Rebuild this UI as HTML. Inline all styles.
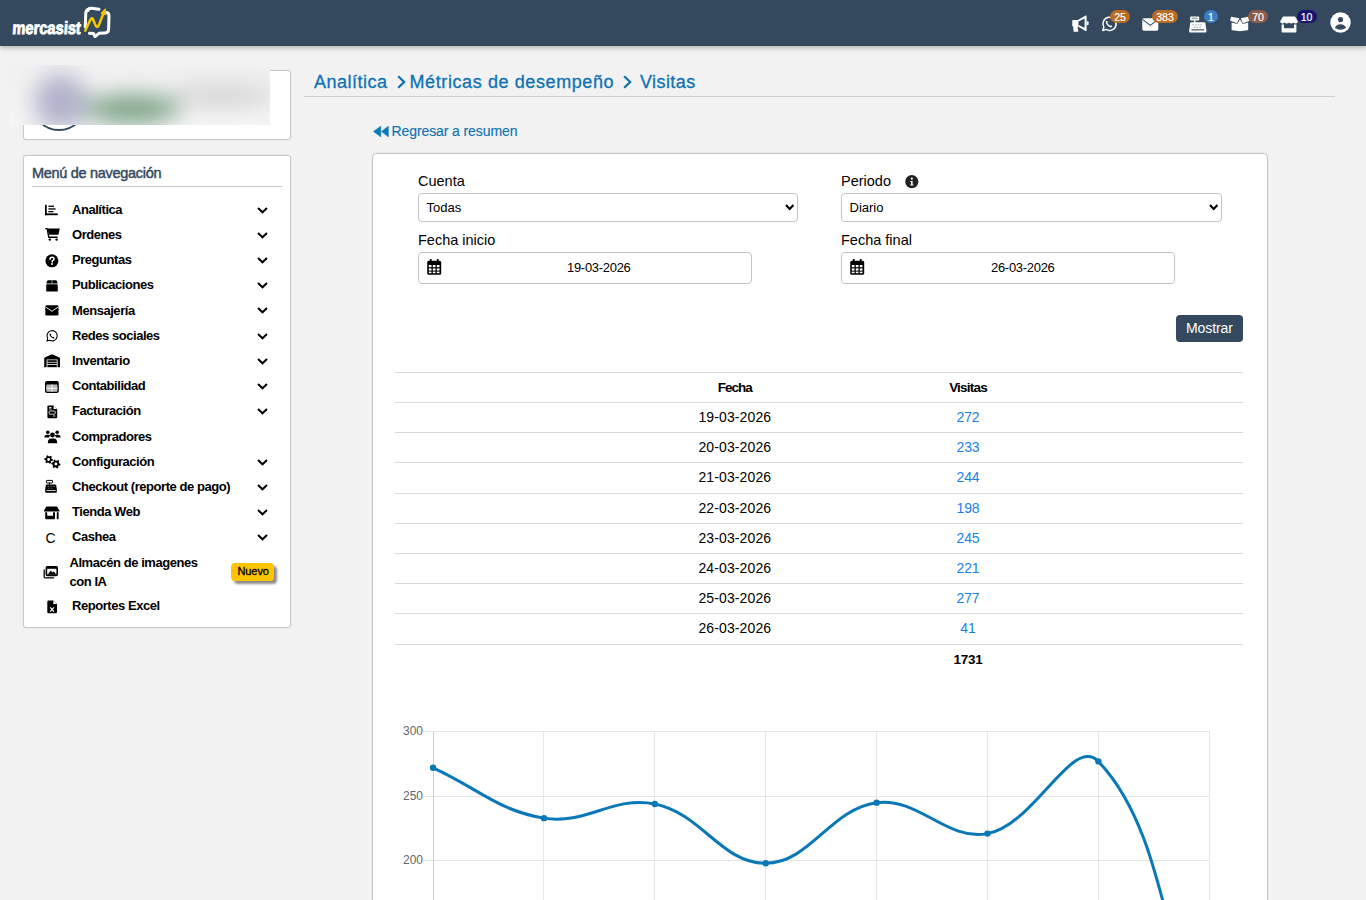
<!DOCTYPE html>
<html><head><meta charset="utf-8"><style>
html,body{margin:0;padding:0}
body{width:1366px;height:900px;overflow:hidden;background:#f2f2f2;position:relative;font-family:"Liberation Sans", sans-serif}
.t{position:absolute;white-space:nowrap;line-height:1}
</style></head><body>
<div style="position:absolute;left:0px;top:0px;width:1366px;height:46px;background:#34495e;box-shadow:0 1px 6px rgba(0,0,0,.35);z-index:2"></div><svg style="position:absolute;left:11px;top:7.5px;z-index:3;overflow:visible" width="75" height="32" viewBox="0 0 75 32">
<g transform="translate(0,25.7) skewX(-4)"><text x="1" y="0" font-family="Liberation Sans" font-weight="700" font-size="17.8" fill="#fff" stroke="#fff" stroke-width="0.9" textLength="68.5" lengthAdjust="spacingAndGlyphs">mercasist</text></g>
</svg><svg style="position:absolute;left:82px;top:6px;z-index:3;overflow:visible" width="30" height="33" viewBox="0 0 30 33">
<path d="M6 4.5 Q6.5 2 9.5 2.2 L17 3.3" fill="none" stroke="#fff" stroke-width="3" stroke-linecap="round"/>
<path d="M3.2 21 L3.8 7 Q4 4 7 3" fill="none" stroke="#fff" stroke-width="3" stroke-linecap="round"/>
<path d="M24.5 6.5 Q27.2 7 27 10 L26.6 23.5 Q26.4 26.8 23 27 L17 27.3 L13 30.5 L11.5 27.4 L7.5 27.2" fill="none" stroke="#fff" stroke-width="3" stroke-linecap="round" stroke-linejoin="round"/>
<path d="M3.3 24.8 L8.6 13.3 Q9.8 11 11 13.2 L13.6 19.5 Q15 22.3 16.7 19.5 L22.2 5.5" fill="none" stroke="#f5c800" stroke-width="2.5" stroke-linecap="round" stroke-linejoin="round"/>
<path d="M19 7.3 L23.3 2.7 L23.8 9 Z" fill="#f5c800" stroke="#f5c800" stroke-width="0.8" stroke-linejoin="round"/>
</svg><svg style="position:absolute;left:1072px;top:15px;z-index:3;overflow:visible" width="17" height="17" viewBox="0 0 17 17">
<path d="M0.3 5.6 Q0.3 5 0.9 5 L6 5 L13.6 0.6 Q14.6 0.2 14.6 1.2 L14.6 15.6 Q14.6 16.6 13.6 16.1 L6 11.5 L5.6 11.5 L6.3 16.8 L1.6 16.8 L1.2 11.5 L0.9 11.5 Q0.3 11.5 0.3 10.9 Z" fill="#fff"/>
<rect x="14.6" y="6.2" width="2" height="4" rx="1" fill="#fff"/>
<path d="M6.4 6.6 L12.6 3.6 L12.6 12.8 L6.4 9.9 Z" fill="#34495e"/></svg><svg style="position:absolute;left:1101px;top:16px;z-index:3;overflow:visible" width="16" height="16" viewBox="0 0 16 16">
<path d="M1.8 14.6 L2.8 11 A6.6 6.6 0 1 1 5.1 13.4 Z" fill="none" stroke="#fff" stroke-width="1.5" stroke-linejoin="round"/>
<path d="M5.6 4.6 Q4.4 5.4 5 7.2 Q6.2 9.9 9 11.2 Q10.6 11.8 11.4 10.6 L10.2 9.2 L9.1 9.8 Q7.2 8.8 6.3 7.1 L6.9 6 Z" fill="#fff"/></svg><div style="position:absolute;left:1110px;top:10px;width:20px;height:13px;border-radius:7px;background:#b96b22;z-index:4"></div><div class="t" style="left:1110px;top:11.5px;width:20px;text-align:center;font-size:10.5px;color:#fff;z-index:5;-webkit-text-stroke:0.2px #fff">25</div><svg style="position:absolute;left:1142px;top:17.5px;z-index:3;overflow:visible" width="17" height="13" viewBox="0 0 17 13">
<rect x="0.3" y="0.3" width="16" height="12.4" rx="1.6" fill="#fff"/>
<path d="M0.8 1.6 L8.3 7.4 L15.8 1.6" fill="none" stroke="#34495e" stroke-width="1.1"/></svg><div style="position:absolute;left:1152px;top:10px;width:26px;height:13px;border-radius:7px;background:#b96b22;z-index:4"></div><div class="t" style="left:1152px;top:11.5px;width:26px;text-align:center;font-size:10.5px;color:#fff;z-index:5;-webkit-text-stroke:0.2px #fff">383</div><svg style="position:absolute;left:1189px;top:15.5px;z-index:3;overflow:visible" width="18" height="17" viewBox="0 0 18 17">
<rect x="1.2" y="0.6" width="9" height="3.8" rx="0.6" fill="#fff"/>
<rect x="2.6" y="1.6" width="6.2" height="1.6" fill="#9aa"/>
<rect x="5" y="4.2" width="1.4" height="2.4" fill="#fff"/>
<path d="M2.2 6.3 L15.2 6.3 Q16.2 6.3 16.4 7.3 L17.4 14.2 L17.4 15.6 Q17.4 16.5 16.5 16.5 L1 16.5 Q0.2 16.5 0.2 15.6 L0.2 14.2 L1.2 7.3 Q1.4 6.3 2.2 6.3 Z" fill="#fff"/>
<g fill="#9aa"><rect x="3.3" y="8.3" width="1.6" height="1" /><rect x="6" y="8.3" width="1.6" height="1"/><rect x="8.7" y="8.3" width="1.6" height="1"/><rect x="11.4" y="8.3" width="1.6" height="1"/>
<rect x="4.6" y="10.6" width="1.6" height="1.2"/><rect x="7.4" y="10.6" width="1.6" height="1.2"/><rect x="10.2" y="10.6" width="1.6" height="1.2"/></g>
<rect x="2.4" y="13.3" width="12.8" height="1.1" fill="#34495e"/></svg><div style="position:absolute;left:1204px;top:10px;width:14px;height:13px;border-radius:7px;background:#3b7dc6;z-index:4"></div><div class="t" style="left:1204px;top:11.5px;width:14px;text-align:center;font-size:10.5px;color:#fff;z-index:5;-webkit-text-stroke:0.2px #fff">1</div><svg style="position:absolute;left:1226px;top:12px;z-index:3;overflow:visible" width="28" height="22" viewBox="0 0 28 22">
<path d="M5.2 4.8 L13.4 6.2 L11 11.2 L4 8.6 Z" fill="#fff"/>
<path d="M14.8 6.2 L22.4 4.8 L23.4 9 L16.8 11.2 Z" fill="#fff"/>
<path d="M5.6 10.6 L11.2 12 L14 7.4 L16.8 12 L22.2 10.6 L22.2 17.2 Q22.2 18 21.4 18.2 L14 19.2 L6.4 18.2 Q5.6 18 5.6 17.2 Z" fill="#fff"/></svg><div style="position:absolute;left:1248px;top:10px;width:20px;height:13px;border-radius:7px;background:#8d5b47;z-index:4"></div><div class="t" style="left:1248px;top:11.5px;width:20px;text-align:center;font-size:10.5px;color:#fff;z-index:5;-webkit-text-stroke:0.2px #fff">70</div><svg style="position:absolute;left:1279.5px;top:15.5px;z-index:3;overflow:visible" width="18" height="17" viewBox="0 0 18 17">
<path d="M3 0.5 L15 0.5 L17.8 5.2 Q17.8 7.6 15.6 7.6 Q14 7.6 13.4 6.5 Q12.6 7.6 11.2 7.6 Q9.8 7.6 9 6.5 Q8.2 7.6 6.8 7.6 Q5.4 7.6 4.6 6.5 Q4 7.6 2.4 7.6 Q0.2 7.6 0.2 5.2 Z" fill="#fff"/>
<path d="M1.6 8.6 L4 8.6 L4 12.2 L14 12.2 L14 8.6 L16.4 8.6 L16.4 15.4 Q16.4 16.6 15.2 16.6 L2.8 16.6 Q1.6 16.6 1.6 15.4 Z" fill="#fff"/></svg><div style="position:absolute;left:1296.5px;top:10px;width:20px;height:13px;border-radius:7px;background:#16166e;z-index:4"></div><div class="t" style="left:1296.5px;top:11.5px;width:20px;text-align:center;font-size:10.5px;color:#fff;z-index:5;-webkit-text-stroke:0.2px #fff">10</div><svg style="position:absolute;left:1329.5px;top:11.5px;z-index:3;overflow:visible" width="21" height="21" viewBox="0 0 21 21">
<circle cx="10.5" cy="10.5" r="10.2" fill="#fff"/>
<circle cx="10.5" cy="7.6" r="2.6" fill="#34495e"/>
<path d="M5 15.8 Q6.2 12.2 10.5 12.2 Q14.8 12.2 16 15.8 Q13.8 17.8 10.5 17.8 Q7.2 17.8 5 15.8 Z" fill="#34495e"/></svg><div style="position:absolute;left:23px;top:70px;width:268px;height:70px;background:#fff;border:1px solid #c9c9c9;border-radius:3px;box-sizing:border-box;box-shadow:0 0 2px rgba(0,0,0,.1)"></div><div style="position:absolute;left:31px;top:75px;width:56px;height:56px;border:2.5px solid #34495e;border-radius:50%;box-sizing:border-box"></div><div style="position:absolute;left:10px;top:65px;width:260px;height:60px;overflow:hidden;background:#f1f1f1;z-index:1"><div style="position:absolute;left:-30px;top:-30px;width:330px;height:130px;filter:blur(11px)"><div style="position:absolute;left:0;top:0;width:330px;height:130px;background:linear-gradient(180deg,#f1f1f1 0%,#f1f1f1 30%,#f3f3f3 55%,#fafafa 100%)"></div><div style="position:absolute;left:54.0px;top:39.0px;width:54px;height:56px;border-radius:50%;background:#b2b3cb"></div><div style="position:absolute;left:104.0px;top:59.0px;width:96px;height:30px;border-radius:50%;background:#7fa489"></div><div style="position:absolute;left:187.0px;top:49.0px;width:110px;height:24px;border-radius:50%;background:#d6d6d6"></div></div></div><div style="position:absolute;left:23px;top:155px;width:268px;height:473px;background:#fff;border:1px solid #c9c9c9;border-radius:3px;box-sizing:border-box;box-shadow:0 0 2px rgba(0,0,0,.1)"></div><div class="t" style="left:32px;top:165.83px;font-size:14.5px;color:#34495e;font-weight:400;letter-spacing:-0.3px;-webkit-text-stroke:0.45px #34495e">Menú de navegación</div><div style="position:absolute;left:32px;top:186px;width:250px;height:1px;background:#c8c8c8"></div><div class="t" style="left:72px;top:202.80px;font-size:13px;color:#000;font-weight:700;letter-spacing:-0.45px;">Analítica</div><svg style="position:absolute;left:257px;top:206.6px" width="11" height="7" viewBox="0 0 11 7"><path d="M1 1.1 L5.5 5.3 L10 1.1" fill="none" stroke="#000" stroke-width="2"/></svg><div class="t" style="left:72px;top:228.00px;font-size:13px;color:#000;font-weight:700;letter-spacing:-0.45px;">Ordenes</div><svg style="position:absolute;left:257px;top:231.8px" width="11" height="7" viewBox="0 0 11 7"><path d="M1 1.1 L5.5 5.3 L10 1.1" fill="none" stroke="#000" stroke-width="2"/></svg><div class="t" style="left:72px;top:253.20px;font-size:13px;color:#000;font-weight:700;letter-spacing:-0.45px;">Preguntas</div><svg style="position:absolute;left:257px;top:257.0px" width="11" height="7" viewBox="0 0 11 7"><path d="M1 1.1 L5.5 5.3 L10 1.1" fill="none" stroke="#000" stroke-width="2"/></svg><div class="t" style="left:72px;top:278.40px;font-size:13px;color:#000;font-weight:700;letter-spacing:-0.45px;">Publicaciones</div><svg style="position:absolute;left:257px;top:282.2px" width="11" height="7" viewBox="0 0 11 7"><path d="M1 1.1 L5.5 5.3 L10 1.1" fill="none" stroke="#000" stroke-width="2"/></svg><div class="t" style="left:72px;top:303.60px;font-size:13px;color:#000;font-weight:700;letter-spacing:-0.45px;">Mensajería</div><svg style="position:absolute;left:257px;top:307.4px" width="11" height="7" viewBox="0 0 11 7"><path d="M1 1.1 L5.5 5.3 L10 1.1" fill="none" stroke="#000" stroke-width="2"/></svg><div class="t" style="left:72px;top:328.80px;font-size:13px;color:#000;font-weight:700;letter-spacing:-0.45px;">Redes sociales</div><svg style="position:absolute;left:257px;top:332.6px" width="11" height="7" viewBox="0 0 11 7"><path d="M1 1.1 L5.5 5.3 L10 1.1" fill="none" stroke="#000" stroke-width="2"/></svg><div class="t" style="left:72px;top:354.00px;font-size:13px;color:#000;font-weight:700;letter-spacing:-0.45px;">Inventario</div><svg style="position:absolute;left:257px;top:357.8px" width="11" height="7" viewBox="0 0 11 7"><path d="M1 1.1 L5.5 5.3 L10 1.1" fill="none" stroke="#000" stroke-width="2"/></svg><div class="t" style="left:72px;top:379.20px;font-size:13px;color:#000;font-weight:700;letter-spacing:-0.45px;">Contabilidad</div><svg style="position:absolute;left:257px;top:383.0px" width="11" height="7" viewBox="0 0 11 7"><path d="M1 1.1 L5.5 5.3 L10 1.1" fill="none" stroke="#000" stroke-width="2"/></svg><div class="t" style="left:72px;top:404.40px;font-size:13px;color:#000;font-weight:700;letter-spacing:-0.45px;">Facturación</div><svg style="position:absolute;left:257px;top:408.2px" width="11" height="7" viewBox="0 0 11 7"><path d="M1 1.1 L5.5 5.3 L10 1.1" fill="none" stroke="#000" stroke-width="2"/></svg><div class="t" style="left:72px;top:429.60px;font-size:13px;color:#000;font-weight:700;letter-spacing:-0.45px;">Compradores</div><div class="t" style="left:72px;top:454.80px;font-size:13px;color:#000;font-weight:700;letter-spacing:-0.45px;">Configuración</div><svg style="position:absolute;left:257px;top:458.6px" width="11" height="7" viewBox="0 0 11 7"><path d="M1 1.1 L5.5 5.3 L10 1.1" fill="none" stroke="#000" stroke-width="2"/></svg><div class="t" style="left:72px;top:480.00px;font-size:13px;color:#000;font-weight:700;letter-spacing:-0.45px;">Checkout (reporte de pago)</div><svg style="position:absolute;left:257px;top:483.8px" width="11" height="7" viewBox="0 0 11 7"><path d="M1 1.1 L5.5 5.3 L10 1.1" fill="none" stroke="#000" stroke-width="2"/></svg><div class="t" style="left:72px;top:505.20px;font-size:13px;color:#000;font-weight:700;letter-spacing:-0.45px;">Tienda Web</div><svg style="position:absolute;left:257px;top:509.0px" width="11" height="7" viewBox="0 0 11 7"><path d="M1 1.1 L5.5 5.3 L10 1.1" fill="none" stroke="#000" stroke-width="2"/></svg><div class="t" style="left:72px;top:530.40px;font-size:13px;color:#000;font-weight:700;letter-spacing:-0.45px;">Cashea</div><svg style="position:absolute;left:257px;top:534.2px" width="11" height="7" viewBox="0 0 11 7"><path d="M1 1.1 L5.5 5.3 L10 1.1" fill="none" stroke="#000" stroke-width="2"/></svg><svg style="position:absolute;left:44px;top:203.5px;z-index:3;overflow:visible" width="15" height="12" viewBox="0 0 15 12">
<rect x="1" y="0.8" width="1.7" height="10.4" fill="#000"/>
<rect x="1" y="9.4" width="12.8" height="1.8" fill="#000"/>
<rect x="4.4" y="1.6" width="5.6" height="1.3" fill="#000"/>
<rect x="4.4" y="4.3" width="7.2" height="1.3" fill="#000"/>
<rect x="4.4" y="7" width="5" height="1.3" fill="#000"/></svg><svg style="position:absolute;left:44.5px;top:227px;z-index:3;overflow:visible" width="15" height="14" viewBox="0 0 15 14">
<path d="M0.3 0.9 L2.6 0.9 L4.3 9.6 L12.6 9.6 L12.6 10.9 L3.2 10.9 L1.6 2.2 L0.3 2.2 Z" fill="#000"/>
<path d="M2.6 1.6 L14.8 1.6 L13.4 7.8 L3.8 7.8 Z" fill="#000"/>
<circle cx="4.8" cy="12.6" r="1.2" fill="#000"/><circle cx="11.6" cy="12.6" r="1.2" fill="#000"/></svg><svg style="position:absolute;left:44.5px;top:253.5px;z-index:3;overflow:visible" width="14" height="14" viewBox="0 0 14 14">
<circle cx="6.9" cy="6.8" r="6.5" fill="#000"/>
<path d="M5 5.2 Q5 3.3 7 3.3 Q9 3.3 9 5 Q9 6.1 7.8 6.6 Q7.1 7 7.1 7.9" fill="none" stroke="#fff" stroke-width="1.5" stroke-linecap="round"/>
<circle cx="7.05" cy="10" r="0.95" fill="#fff"/></svg><svg style="position:absolute;left:45.5px;top:279.5px;z-index:3;overflow:visible" width="12" height="12" viewBox="0 0 12 12">
<path d="M1.6 0.2 L10.4 0.2 L11.8 3.6 L0.2 3.6 Z" fill="#000"/>
<rect x="0.2" y="4.3" width="11.6" height="7.3" rx="1.2" fill="#000"/>
<rect x="5.6" y="0.2" width="0.8" height="3.4" fill="#7cc"/></svg><svg style="position:absolute;left:44.5px;top:304.8px;z-index:3;overflow:visible" width="14" height="11" viewBox="0 0 14 11">
<rect x="0.3" y="0.3" width="13.2" height="10.2" rx="1.3" fill="#000"/>
<path d="M0.5 1.9 L6.9 6.3 L13.3 1.9" fill="none" stroke="#fff" stroke-width="0.9"/></svg><svg style="position:absolute;left:45.5px;top:329.5px;z-index:3;overflow:visible" width="12" height="12" viewBox="0 0 12 12">
<path d="M0.9 11.1 L1.7 8.3 A5.1 5.1 0 1 1 3.6 10.2 Z" fill="none" stroke="#000" stroke-width="1.1" stroke-linejoin="round"/>
<path d="M4 3.2 Q3.2 3.8 3.6 5.2 Q4.5 7.3 6.8 8.3 Q8 8.8 8.6 7.9 L7.7 6.8 L6.9 7.3 Q5.5 6.5 4.8 5.3 L5.2 4.4 Z" fill="#000"/></svg><svg style="position:absolute;left:44px;top:353.5px;z-index:3;overflow:visible" width="17" height="14" viewBox="0 0 17 14">
<path d="M0.2 4.6 Q0.2 3.6 1.2 3.2 L8.1 0.3 L15 3.2 Q16 3.6 16 4.6 L16 13.2 L13.6 13.2 L13.6 5.6 L2.6 5.6 L2.6 13.2 L0.2 13.2 Z" fill="#000"/>
<rect x="3.4" y="6.2" width="9.4" height="1.7" fill="#000"/>
<rect x="3.4" y="8.6" width="9.4" height="1.6" fill="#000"/>
<rect x="3.4" y="11" width="9.4" height="2.2" fill="#000"/></svg><svg style="position:absolute;left:44.5px;top:380.5px;z-index:3;overflow:visible" width="14" height="12" viewBox="0 0 14 12">
<rect x="0.8" y="0.8" width="12.2" height="10.4" rx="1.2" fill="none" stroke="#000" stroke-width="1.6"/>
<rect x="0.8" y="0.8" width="12.2" height="3" fill="#000"/>
<rect x="1.6" y="3.6" width="10.6" height="6.8" fill="#b8b8b8"/>
<rect x="6.5" y="3.5" width="0.9" height="7" fill="#fff"/>
<rect x="1.5" y="6.8" width="11" height="0.9" fill="#fff"/></svg><svg style="position:absolute;left:46.5px;top:404.5px;z-index:3;overflow:visible" width="11" height="14" viewBox="0 0 11 14">
<path d="M1.5 0.4 L6.6 0.4 L10.2 4 L10.2 12 Q10.2 13.2 9 13.2 L1.5 13.2 Q0.4 13.2 0.4 12 L0.4 1.6 Q0.4 0.4 1.5 0.4 Z" fill="#000"/>
<path d="M6.6 0.4 L6.6 4 L10.2 4" fill="#fff"/>
<rect x="2" y="2" width="2.6" height="0.8" fill="#fff"/><rect x="2" y="3.6" width="2.6" height="0.8" fill="#fff"/>
<rect x="2.2" y="6" width="6" height="3.2" rx="0.6" fill="none" stroke="#fff" stroke-width="0.8"/>
<rect x="6" y="10.6" width="2.4" height="0.8" fill="#fff"/></svg><svg style="position:absolute;left:43.5px;top:429.5px;z-index:3;overflow:visible" width="17" height="14" viewBox="0 0 17 14">
<circle cx="3.8" cy="2.3" r="1.8" fill="#000"/><circle cx="13.2" cy="2.3" r="1.8" fill="#000"/>
<path d="M0.3 7.4 Q0.5 4.8 3 4.8 L4.8 4.8 Q5.8 4.8 6.2 5.3 Q5.2 6.4 5.2 7.4 Z" fill="#000"/>
<path d="M16.7 7.4 Q16.5 4.8 14 4.8 L12.2 4.8 Q11.2 4.8 10.8 5.3 Q11.8 6.4 11.8 7.4 Z" fill="#000"/>
<circle cx="8.5" cy="5" r="2.4" fill="#000"/>
<path d="M3.8 13.2 Q3.8 8.6 7.2 8.6 L9.8 8.6 Q13.2 8.6 13.2 13.2 Z" fill="#000"/></svg><svg style="position:absolute;left:43.5px;top:454.5px;z-index:3;overflow:visible" width="17" height="14" viewBox="0 0 17 14"><polygon points="9.00,4.50 8.85,5.64 7.34,6.08 6.84,6.74 6.80,8.31 5.74,8.75 4.60,7.67 3.78,7.56 2.40,8.31 1.49,7.61 1.86,6.08 1.54,5.32 0.20,4.50 0.35,3.36 1.86,2.92 2.36,2.26 2.40,0.69 3.46,0.25 4.60,1.33 5.42,1.44 6.80,0.69 7.71,1.39 7.34,2.92 7.66,3.68" fill="#000"/><circle cx="4.6" cy="4.5" r="1.41" fill="#fff"/><polygon points="16.50,9.00 16.34,10.19 14.77,10.66 14.24,11.34 14.20,12.98 13.09,13.44 11.90,12.31 11.04,12.20 9.60,12.98 8.65,12.25 9.03,10.66 8.70,9.86 7.30,9.00 7.46,7.81 9.03,7.34 9.56,6.66 9.60,5.02 10.71,4.56 11.90,5.69 12.76,5.80 14.20,5.02 15.15,5.75 14.77,7.34 15.10,8.14" fill="#000"/><circle cx="11.9" cy="9" r="1.47" fill="#fff"/></svg><svg style="position:absolute;left:45px;top:479.5px;z-index:3;overflow:visible" width="12" height="13" viewBox="0 0 12 13">
<rect x="1.4" y="0.4" width="6.2" height="2.6" rx="0.5" fill="none" stroke="#000" stroke-width="1"/>
<rect x="4" y="2.8" width="1" height="1.8" fill="#000"/>
<path d="M1.6 4.4 L10.3 4.4 Q11 4.4 11.2 5.1 L11.8 9.4 L11.8 12 Q11.8 12.8 11 12.8 L0.9 12.8 Q0.2 12.8 0.2 12 L0.2 9.4 L0.9 5.1 Q1.1 4.4 1.6 4.4 Z" fill="#000"/>
<g fill="#888"><rect x="2.6" y="6" width="1.2" height="0.8"/><rect x="5.4" y="6" width="1.2" height="0.8"/><rect x="8.2" y="6" width="1.2" height="0.8"/>
<rect x="3.3" y="7.8" width="1.2" height="0.8"/><rect x="6.1" y="7.8" width="1.2" height="0.8"/></g>
<rect x="1.5" y="10.2" width="9" height="0.8" fill="#fff"/></svg><svg style="position:absolute;left:44px;top:505.5px;z-index:3;overflow:visible" width="16" height="14" viewBox="0 0 16 14">
<path d="M2.4 0.5 L13 0.5 L15.4 4.4 L15.4 5.4 L0 5.4 L0 4.4 Z" fill="#000"/>
<path d="M1.2 6.2 L3.2 6.2 L3.2 9.8 L9 9.8 L9 6.2 L11 6.2 L11 12.2 Q11 13.2 10 13.2 L2.2 13.2 Q1.2 13.2 1.2 12.2 Z" fill="#000"/>
<rect x="12.8" y="6.2" width="1.8" height="7" fill="#000"/></svg><div class="t" style="left:45.5px;top:530.8px;font-size:14px;color:#000">C</div><svg style="position:absolute;left:42.5px;top:565.5px;z-index:3;overflow:visible" width="15" height="13" viewBox="0 0 15 13">
<rect x="3.4" y="0.8" width="10.8" height="8.6" rx="1" fill="none" stroke="#000" stroke-width="1.6"/>
<rect x="3.4" y="0.8" width="10.8" height="2" fill="#000"/>
<path d="M4.6 8.8 L7.8 4.6 L9.6 6.6 L10.8 5.6 L13.6 8.8 Z" fill="#000"/>
<path d="M1.2 3.6 L1.2 10.6 Q1.2 11.8 2.4 11.8 L11.2 11.8" fill="none" stroke="#000" stroke-width="1.3"/></svg><svg style="position:absolute;left:46.5px;top:599.5px;z-index:3;overflow:visible" width="11" height="14" viewBox="0 0 11 14">
<path d="M1.4 0.5 L6.4 0.5 L10 4.1 L10 12 Q10 13.2 8.8 13.2 L1.4 13.2 Q0.3 13.2 0.3 12 L0.3 1.7 Q0.3 0.5 1.4 0.5 Z" fill="#000"/>
<path d="M6.4 0.5 L6.4 4.1 L10 4.1 Z" fill="#fff"/>
<path d="M3.2 7.4 L7 11.6 M7 7.4 L3.2 11.6" stroke="#fff" stroke-width="1.2"/></svg><div class="t" style="left:69.5px;top:555.90px;font-size:13px;color:#000;font-weight:700;letter-spacing:-0.45px;">Almacén de imagenes</div><div class="t" style="left:69.5px;top:574.60px;font-size:13px;color:#000;font-weight:700;letter-spacing:-0.45px;">con IA</div><div class="t" style="left:72px;top:599.00px;font-size:13px;color:#000;font-weight:700;letter-spacing:-0.45px;">Reportes Excel</div><div style="position:absolute;left:233.5px;top:565.5px;width:43px;height:18px;background:#666;border-radius:4px;opacity:.75;filter:blur(1px)"></div><div style="position:absolute;left:231px;top:563px;width:43px;height:18px;background:#fcc500;border-radius:4px"></div><div class="t" style="left:237.5px;top:565.89px;font-size:11px;color:#000;font-weight:400;letter-spacing:-0.1px;-webkit-text-stroke:0.3px #000">Nuevo</div><div class="t" style="left:314px;top:72.76px;font-size:18px;color:#0e72b2;font-weight:400;letter-spacing:0.5px;-webkit-text-stroke:0.3px #0e72b2">Analítica</div><div class="t" style="left:409.5px;top:72.76px;font-size:18px;color:#0e72b2;font-weight:400;letter-spacing:0.6px;-webkit-text-stroke:0.3px #0e72b2">Métricas de desempeño</div><div class="t" style="left:640px;top:72.76px;font-size:18px;color:#0e72b2;font-weight:400;letter-spacing:0.42px;-webkit-text-stroke:0.3px #0e72b2">Visitas</div><svg style="position:absolute;left:396.5px;top:74.5px" width="9" height="14" viewBox="0 0 9 14"><path d="M1.2 1.2 L7.2 7 L1.2 12.8" fill="none" stroke="#0b70b4" stroke-width="2.2"/></svg><svg style="position:absolute;left:622.5px;top:74.5px" width="9" height="14" viewBox="0 0 9 14"><path d="M1.2 1.2 L7.2 7 L1.2 12.8" fill="none" stroke="#0b70b4" stroke-width="2.2"/></svg><svg style="position:absolute;left:372.5px;top:126px" width="16" height="11" viewBox="0 0 16 11"><path d="M0.5 5.5 L7.8 0.2 L7.8 10.8 Z M8.6 5.5 L15.3 0.2 L15.3 10.8 Z" fill="#0b78b8" stroke="#0b78b8" stroke-width="0.6" stroke-linejoin="round"/></svg><div style="position:absolute;left:304px;top:96px;width:1031px;height:1px;background:#cfcfcf"></div><div class="t" style="left:391.5px;top:124.35px;font-size:14px;color:#0e72b2;font-weight:400;letter-spacing:-0.1px;-webkit-text-stroke:0.15px #0e72b2">Regresar a resumen</div><div style="position:absolute;left:372px;top:153px;width:896px;height:800px;background:#fff;border:1px solid #c9c9c9;border-radius:5px;box-sizing:border-box;box-shadow:0 0 2px rgba(0,0,0,.12)"></div><div class="t" style="left:418px;top:173.73px;font-size:14.5px;color:#000;font-weight:400;letter-spacing:0px;">Cuenta</div><div class="t" style="left:841px;top:173.73px;font-size:14.5px;color:#000;font-weight:400;letter-spacing:0px;">Periodo</div><div style="position:absolute;left:418px;top:193px;width:380px;height:29px;border:1px solid #c4c4c4;border-radius:4px;box-sizing:border-box;background:#fff"></div><div style="position:absolute;left:841px;top:193px;width:381px;height:29px;border:1px solid #c4c4c4;border-radius:4px;box-sizing:border-box;background:#fff"></div><div class="t" style="left:426.5px;top:201.00px;font-size:13px;color:#000;font-weight:400;letter-spacing:0px;">Todas</div><div class="t" style="left:849.5px;top:201.00px;font-size:13px;color:#000;font-weight:400;letter-spacing:0px;">Diario</div><div class="t" style="left:418px;top:232.73px;font-size:14.5px;color:#000;font-weight:400;letter-spacing:0px;">Fecha inicio</div><div class="t" style="left:841px;top:232.73px;font-size:14.5px;color:#000;font-weight:400;letter-spacing:0px;">Fecha final</div><div style="position:absolute;left:418px;top:252px;width:334px;height:32px;border:1px solid #c4c4c4;border-radius:4px;box-sizing:border-box;background:#fff"></div><div style="position:absolute;left:841px;top:252px;width:334px;height:32px;border:1px solid #c4c4c4;border-radius:4px;box-sizing:border-box;background:#fff"></div><div class="t" style="left:567px;top:261.00px;font-size:13px;color:#000;font-weight:400;letter-spacing:-0.3px;">19-03-2026</div><div class="t" style="left:991px;top:261.00px;font-size:13px;color:#000;font-weight:400;letter-spacing:-0.3px;">26-03-2026</div><div style="position:absolute;left:1176px;top:315px;width:67px;height:27px;background:#34495e;border-radius:4px"></div><svg style="position:absolute;left:784.5px;top:203.5px" width="10" height="7" viewBox="0 0 10 7"><path d="M1 1 L4.7 4.9 L8.4 1" fill="none" stroke="#000" stroke-width="2.1"/></svg><svg style="position:absolute;left:1208.5px;top:203.5px" width="10" height="7" viewBox="0 0 10 7"><path d="M1 1 L4.7 4.9 L8.4 1" fill="none" stroke="#000" stroke-width="2.1"/></svg><svg style="position:absolute;left:427px;top:259px" width="15" height="16" viewBox="0 0 15 16"><rect x="2.8" y="0" width="1.8" height="3" fill="#000"/><rect x="9.8" y="0" width="1.8" height="3" fill="#000"/><rect x="0.2" y="1.8" width="14" height="14" rx="1.6" fill="#000"/><g fill="#fff"><rect x="1.8" y="6" width="2.7" height="2.2"/><rect x="5.8" y="6" width="2.7" height="2.2"/><rect x="9.8" y="6" width="2.7" height="2.2"/><rect x="1.8" y="9.4" width="2.7" height="2.2"/><rect x="5.8" y="9.4" width="2.7" height="2.2"/><rect x="9.8" y="9.4" width="2.7" height="2.2"/><rect x="1.8" y="12.6" width="2.7" height="1.6"/><rect x="5.8" y="12.6" width="2.7" height="1.6"/><rect x="9.8" y="12.6" width="2.7" height="1.6"/></g></svg><svg style="position:absolute;left:850px;top:259px" width="15" height="16" viewBox="0 0 15 16"><rect x="2.8" y="0" width="1.8" height="3" fill="#000"/><rect x="9.8" y="0" width="1.8" height="3" fill="#000"/><rect x="0.2" y="1.8" width="14" height="14" rx="1.6" fill="#000"/><g fill="#fff"><rect x="1.8" y="6" width="2.7" height="2.2"/><rect x="5.8" y="6" width="2.7" height="2.2"/><rect x="9.8" y="6" width="2.7" height="2.2"/><rect x="1.8" y="9.4" width="2.7" height="2.2"/><rect x="5.8" y="9.4" width="2.7" height="2.2"/><rect x="9.8" y="9.4" width="2.7" height="2.2"/><rect x="1.8" y="12.6" width="2.7" height="1.6"/><rect x="5.8" y="12.6" width="2.7" height="1.6"/><rect x="9.8" y="12.6" width="2.7" height="1.6"/></g></svg><svg style="position:absolute;left:904.5px;top:174.5px" width="14" height="14" viewBox="0 0 14 14"><circle cx="6.8" cy="6.7" r="6.6" fill="#222"/><circle cx="6.8" cy="3.7" r="1.1" fill="#fff"/><path d="M5.3 5.9 L7.6 5.9 L7.6 9.4 L8.4 9.4 L8.4 10.6 L5.3 10.6 L5.3 9.4 L6.1 9.4 L6.1 7.1 L5.3 7.1 Z" fill="#fff"/></svg><div class="t" style="left:1186px;top:321.15px;font-size:14px;color:#fff;font-weight:400;letter-spacing:-0.1px;">Mostrar</div><div style="position:absolute;left:395px;top:372px;width:848px;height:1px;background:#d9d9d9"></div><div style="position:absolute;left:395px;top:402px;width:848px;height:1px;background:#d9d9d9"></div><div style="position:absolute;left:395px;top:432px;width:848px;height:1px;background:#d9d9d9"></div><div style="position:absolute;left:395px;top:462px;width:848px;height:1px;background:#d9d9d9"></div><div style="position:absolute;left:395px;top:493px;width:848px;height:1px;background:#d9d9d9"></div><div style="position:absolute;left:395px;top:523px;width:848px;height:1px;background:#d9d9d9"></div><div style="position:absolute;left:395px;top:553px;width:848px;height:1px;background:#d9d9d9"></div><div style="position:absolute;left:395px;top:583px;width:848px;height:1px;background:#d9d9d9"></div><div style="position:absolute;left:395px;top:613px;width:848px;height:1px;background:#d9d9d9"></div><div style="position:absolute;left:395px;top:644px;width:848px;height:1px;background:#d9d9d9"></div><div class="t" style="left:534.8px;width:400px;text-align:center;top:380.97px;font-size:13.5px;color:#000;font-weight:700;letter-spacing:-1.0px;">Fecha</div><div class="t" style="left:768px;width:400px;text-align:center;top:380.97px;font-size:13.5px;color:#000;font-weight:700;letter-spacing:-0.8px;">Visitas</div><div class="t" style="left:534.8px;width:400px;text-align:center;top:410.35px;font-size:14px;color:#000;font-weight:400;letter-spacing:0.12px;">19-03-2026</div><div class="t" style="left:768px;width:400px;text-align:center;top:410.35px;font-size:14px;color:#1a82e2;font-weight:400;letter-spacing:-0.1px;">272</div><div class="t" style="left:534.8px;width:400px;text-align:center;top:440.35px;font-size:14px;color:#000;font-weight:400;letter-spacing:0.12px;">20-03-2026</div><div class="t" style="left:768px;width:400px;text-align:center;top:440.35px;font-size:14px;color:#1a82e2;font-weight:400;letter-spacing:-0.1px;">233</div><div class="t" style="left:534.8px;width:400px;text-align:center;top:470.35px;font-size:14px;color:#000;font-weight:400;letter-spacing:0.12px;">21-03-2026</div><div class="t" style="left:768px;width:400px;text-align:center;top:470.35px;font-size:14px;color:#1a82e2;font-weight:400;letter-spacing:-0.1px;">244</div><div class="t" style="left:534.8px;width:400px;text-align:center;top:501.35px;font-size:14px;color:#000;font-weight:400;letter-spacing:0.12px;">22-03-2026</div><div class="t" style="left:768px;width:400px;text-align:center;top:501.35px;font-size:14px;color:#1a82e2;font-weight:400;letter-spacing:-0.1px;">198</div><div class="t" style="left:534.8px;width:400px;text-align:center;top:531.35px;font-size:14px;color:#000;font-weight:400;letter-spacing:0.12px;">23-03-2026</div><div class="t" style="left:768px;width:400px;text-align:center;top:531.35px;font-size:14px;color:#1a82e2;font-weight:400;letter-spacing:-0.1px;">245</div><div class="t" style="left:534.8px;width:400px;text-align:center;top:561.35px;font-size:14px;color:#000;font-weight:400;letter-spacing:0.12px;">24-03-2026</div><div class="t" style="left:768px;width:400px;text-align:center;top:561.35px;font-size:14px;color:#1a82e2;font-weight:400;letter-spacing:-0.1px;">221</div><div class="t" style="left:534.8px;width:400px;text-align:center;top:591.35px;font-size:14px;color:#000;font-weight:400;letter-spacing:0.12px;">25-03-2026</div><div class="t" style="left:768px;width:400px;text-align:center;top:591.35px;font-size:14px;color:#1a82e2;font-weight:400;letter-spacing:-0.1px;">277</div><div class="t" style="left:534.8px;width:400px;text-align:center;top:621.35px;font-size:14px;color:#000;font-weight:400;letter-spacing:0.12px;">26-03-2026</div><div class="t" style="left:768px;width:400px;text-align:center;top:621.35px;font-size:14px;color:#1a82e2;font-weight:400;letter-spacing:-0.1px;">41</div><div class="t" style="left:768px;width:400px;text-align:center;top:653.07px;font-size:13.5px;color:#000;font-weight:700;letter-spacing:-0.2px;">1731</div><svg style="position:absolute;left:0;top:0" width="1366" height="900"><line x1="423" y1="731.5" x2="1210" y2="731.5" stroke="#e6e6e6" stroke-width="1"/><line x1="423" y1="796.5" x2="1210" y2="796.5" stroke="#e6e6e6" stroke-width="1"/><line x1="423" y1="860.5" x2="1210" y2="860.5" stroke="#e6e6e6" stroke-width="1"/><line x1="433.5" y1="731" x2="433.5" y2="900" stroke="#cfcfcf" stroke-width="1"/><line x1="543.5" y1="731" x2="543.5" y2="900" stroke="#e6e6e6" stroke-width="1"/><line x1="654.5" y1="731" x2="654.5" y2="900" stroke="#e6e6e6" stroke-width="1"/><line x1="765.5" y1="731" x2="765.5" y2="900" stroke="#e6e6e6" stroke-width="1"/><line x1="876.5" y1="731" x2="876.5" y2="900" stroke="#e6e6e6" stroke-width="1"/><line x1="987.5" y1="731" x2="987.5" y2="900" stroke="#e6e6e6" stroke-width="1"/><line x1="1098.5" y1="731" x2="1098.5" y2="900" stroke="#e6e6e6" stroke-width="1"/><line x1="1209.5" y1="731" x2="1209.5" y2="900" stroke="#e6e6e6" stroke-width="1"/><path d="M433.07 767.82 C477.42 787.94 497.70 810.60 543.95 818.13 C586.41 825.05 613.09 795.44 654.83 803.94 C701.79 813.50 721.47 863.54 765.71 863.28 C810.17 863.02 830.17 808.86 876.59 802.65 C918.88 796.99 946.20 841.29 987.47 833.61 C1034.91 824.78 1072.63 734.44 1098.35 761.37 C1161.33 827.32 1164.88 944.03 1209.23 1065.81" fill="none" stroke="#0a78b8" stroke-width="3"/><circle cx="433.07" cy="767.82" r="3.2" fill="#0a78b8"/><circle cx="543.95" cy="818.13" r="3.2" fill="#0a78b8"/><circle cx="654.83" cy="803.94" r="3.2" fill="#0a78b8"/><circle cx="765.71" cy="863.28" r="3.2" fill="#0a78b8"/><circle cx="876.59" cy="802.65" r="3.2" fill="#0a78b8"/><circle cx="987.47" cy="833.61" r="3.2" fill="#0a78b8"/><circle cx="1098.35" cy="761.37" r="3.2" fill="#0a78b8"/><circle cx="1209.23" cy="1065.81" r="3.2" fill="#0a78b8"/></svg><div class="t" style="left:403px;top:725.34px;font-size:12px;color:#666;font-weight:400;letter-spacing:0px;">300</div><div class="t" style="left:403px;top:789.84px;font-size:12px;color:#666;font-weight:400;letter-spacing:0px;">250</div><div class="t" style="left:403px;top:854.34px;font-size:12px;color:#666;font-weight:400;letter-spacing:0px;">200</div>
</body></html>
